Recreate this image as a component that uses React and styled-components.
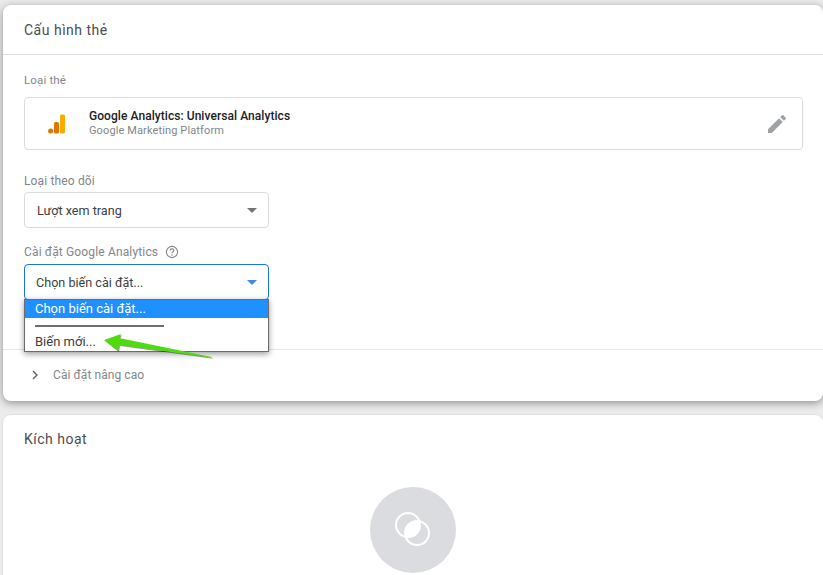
import styled, { createGlobalStyle } from "styled-components";

const GlobalStyle = createGlobalStyle`
  html, body {
    margin: 0;
    height: 100%;
    overflow: hidden;
    background: #ececec;
  }
  body {
    font-family: Roboto, "Noto Sans", sans-serif;
  }
`;

const Page = styled.div`
  width: 823px;
  height: 575px;
  padding: 5px 0 0 3px;
  box-sizing: border-box;
  overflow: hidden;
  display: flex;
  flex-direction: column;
  gap: 14px;
`;

const Card = styled.section`
  background: #fff;
  border-radius: 8px;
  flex: none;
  height: ${(props) => props.height}px;
  box-shadow: 0 2px 8px rgba(60, 64, 67, 0.55);
`;

const Flat = styled(Card)`
  box-shadow: 0 0 0 1px #dfe0e2;
`;

const CardHeader = styled.header`
  height: 49px;
  padding: 0 21px;
  display: flex;
  align-items: center;
  border-bottom: 1px solid #dadce0;
  color: #4a4d50;
  font-size: 14px;
  letter-spacing: 0.5px;
`;

const PlainHeader = styled(CardHeader)`
  border-bottom: none;
  height: 48px;
`;

const Body = styled.div`
  padding: 17px 0 0 22px;
  position: relative;
`;

const Label = styled.div`
  margin-left: -1px;
  color: #80868b;
  font-size: ${(props) => props.size || 12}px;
  line-height: 16px;
  letter-spacing: 0.15px;
  display: flex;
  align-items: center;
  gap: 7px;
`;

const TagType = styled.div`
  margin: 9px 20px 0 -1px;
  height: 51px;
  border: 1px solid #dadce0;
  border-radius: 4px;
  display: flex;
  align-items: center;
  padding: 0 13px 0 23px;
`;

const TagLogo = styled.svg`
  width: 18px;
  height: 20px;
  margin-right: 23px;
  flex: none;
`;

const TagText = styled.div`
  flex: 1;
`;

const TagName = styled.div`
  font-size: 12px;
  font-weight: 500;
  line-height: 15px;
  letter-spacing: 0.06px;
  color: #202124;
`;

const TagSub = styled.div`
  font-size: 11px;
  line-height: 14px;
  color: #80868b;
  letter-spacing: 0.12px;
`;

const Field = styled.div`
  margin-top: ${(props) => props.top}px;
  position: relative;
`;

const Select = styled.div`
  width: 245px;
  height: 36px;
  box-sizing: border-box;
  margin: ${(props) => (props.$focus ? 4 : 3)}px 0 0 -1px;
  padding: 0 11px 0 ${(props) => (props.$focus ? 11 : 12)}px;
  border: 1px solid ${(props) => (props.$focus ? "#1a73e8" : "#dadce0")};
  border-radius: 4px;
  display: flex;
  align-items: center;
  justify-content: space-between;
  color: #3c4043;
  font-size: 12.6px;
`;

const Caret = styled.span`
  width: 0;
  height: 0;
  border-left: 5px solid transparent;
  border-right: 5px solid transparent;
  border-top: 5px solid ${(props) => (props.$focus ? "#4285f4" : "#757575")};
`;

const Menu = styled.div`
  position: absolute;
  left: -1px;
  top: 55px;
  width: 245px;
  box-sizing: border-box;
  height: 53px;
  background: #fff;
  border: 1px solid #6b6b6b;
  box-shadow: 0 2px 6px rgba(0, 0, 0, 0.4);
  z-index: 2;
  font-size: 13px;
`;

const MenuItem = styled.div`
  height: ${(props) => props.height}px;
  line-height: ${(props) => props.height}px;
  padding-left: 10px;
  background: ${(props) => (props.$active ? "#1e90ff" : "transparent")};
  color: ${(props) => (props.$active ? "#fff" : "#3c3c3c")};
`;

const MenuRule = styled.div`
  height: 2px;
  width: 129px;
  margin: 7px 0 6px 10px;
  background: #6e6e6e;
`;

const Advanced = styled.div`
  margin: 49px 0 0 -22px;
  height: 51px;
  border-top: 1px solid #e4e5e7;
  box-sizing: border-box;
  display: flex;
  align-items: center;
  padding-left: 27px;
  gap: 13px;
  color: #80868b;
  font-size: 12px;
  letter-spacing: 0.08px;
`;

const Arrow = styled.svg`
  position: absolute;
  left: 100px;
  top: 328px;
  width: 120px;
  height: 36px;
  z-index: 3;
  filter: drop-shadow(1px 1px 0.6px rgba(0, 0, 0, 0.4));
`;

const EmptyState = styled.div`
  display: flex;
  justify-content: center;
  padding: 24px 0 0 0;
`;

const Circle = styled.div`
  width: 86px;
  height: 86px;
  border-radius: 50%;
  background: #dadce0;
  display: flex;
  align-items: center;
  justify-content: center;
`;

const App = () => (
  <>
    <GlobalStyle />
    <Page>
      <Card height={396}>
        <CardHeader>Cấu hình thẻ</CardHeader>
        <Body>
          <Label size={11.5}>Loại thẻ</Label>
          <TagType>
            <TagLogo viewBox="0 0 18 20">
              <circle cx="2.6" cy="17" r="2.5" fill="#e37400" />
              <rect x="6" y="8" width="5" height="11.5" rx="1.5" fill="#e37400" />
              <rect x="12" y="0.5" width="5" height="19" rx="1.5" fill="#f9ab00" />
            </TagLogo>
            <TagText>
              <TagName>Google Analytics: Universal Analytics</TagName>
              <TagSub>Google Marketing Platform</TagSub>
            </TagText>
            <svg width="24" height="24" viewBox="0 0 24 24" fill="#a0a3a6">
              <path d="M3 17.25V21h3.75L17.81 9.94l-3.75-3.75L3 17.25zM20.71 7.04a1 1 0 0 0 0-1.41l-2.34-2.34a1 1 0 0 0-1.41 0l-1.83 1.83 3.75 3.75 1.83-1.83z" />
            </svg>
          </TagType>

          <Field top={23}>
            <Label>Loại theo dõi</Label>
            <Select>
              Lượt xem trang
              <Caret />
            </Select>
          </Field>

          <Field top={16}>
            <Label>
              Cài đặt Google Analytics
              <svg width="14" height="14" viewBox="0 0 14 14" fill="none">
                <circle cx="7" cy="7" r="5.6" stroke="#80868b" strokeWidth="1.1" />
                <path
                  d="M5.2 5.6c0-1 .8-1.7 1.8-1.7s1.8.7 1.8 1.6c0 1.2-1.8 1.3-1.8 2.7"
                  stroke="#80868b"
                  strokeWidth="1.1"
                />
                <circle cx="7" cy="10" r=".7" fill="#80868b" />
              </svg>
            </Label>
            <Select $focus>
              Chọn biến cài đặt...
              <Caret $focus />
            </Select>
            <Menu>
              <MenuItem $active height={18}>
                Chọn biến cài đặt...
              </MenuItem>
              <MenuRule />
              <MenuItem height={17}>Biến mới...</MenuItem>
            </Menu>
          </Field>

          <Advanced>
            <svg width="10" height="10" viewBox="0 0 10 10" fill="none">
              <path d="M3 1l4 4-4 4" stroke="#5f6368" strokeWidth="1.4" />
            </svg>
            Cài đặt nâng cao
          </Advanced>
        </Body>
      </Card>

      <Flat height={200}>
        <PlainHeader>Kích hoạt</PlainHeader>
        <EmptyState>
          <Circle>
            <svg width="36" height="36" viewBox="0 0 36 36" fill="none">
              <circle cx="13" cy="13" r="12" stroke="#fff" strokeWidth="2" />
              <circle cx="22" cy="21" r="12" stroke="#fff" strokeWidth="2" />
              <path d="M24.4 9.24A12 12 0 0 1 10.6 24.76 12 12 0 0 1 24.4 9.24z" fill="#fff" />
            </svg>
          </Circle>
        </EmptyState>
      </Flat>
    </Page>
    <Arrow viewBox="0 0 120 36">
      <path d="M4 12 L21 6 L19 10 L112 29 L111 29.6 L19 17 L18 23 Z" fill="#4fdc0e" />
    </Arrow>
  </>
);

export default App;
